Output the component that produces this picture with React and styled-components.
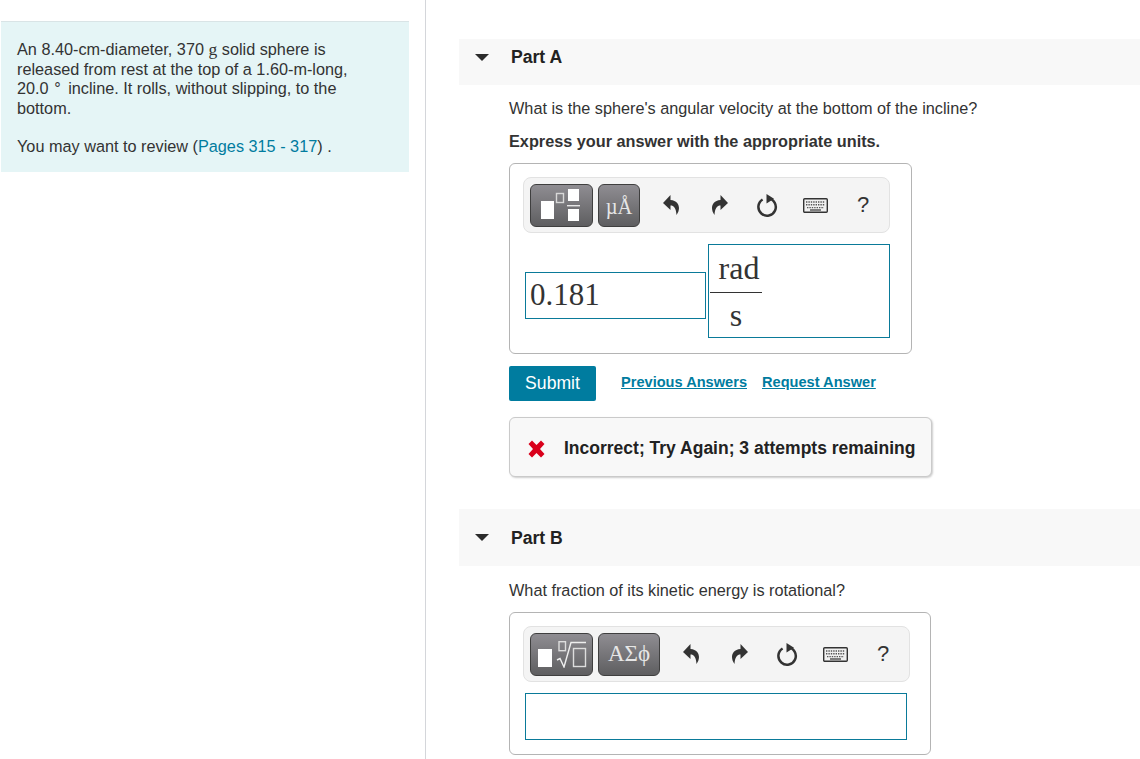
import React from 'react';
import styled, { createGlobalStyle } from 'styled-components';

const GlobalStyle = createGlobalStyle`
  html, body {
    margin: 0;
    height: 100%;
    overflow: hidden;
    background: #fff;
  }
  body {
    font-family: "Liberation Sans", Arial, sans-serif;
    font-size: 16.25px;
    color: #333;
  }
  #root { height: 100%; }
`;

const Page = styled.div`
  display: flex;
  height: 759px;
`;

const Sidebar = styled.aside`
  width: 425px;
  flex: none;
  box-sizing: content-box;
  border-right: 1px solid #d4d6da;
  padding-top: 21px;
`;

const InfoPanel = styled.div`
  width: 408px;
  height: 151px;
  margin-left: 1px;
  box-sizing: border-box;
  padding: 18px 16px 0;
  background: #e5f5f6;
  border-top: 1px solid #d9e4e6;
  line-height: 19.6px;
`;

const InfoText = styled.p`
  width: 338px;
  margin: 0 0 19px;
`;

const Unit = styled.span`
  font-family: "Liberation Serif", serif;
  font-size: 17.5px;
`;

const Degree = styled.span`
  margin: 0 3px 0 1px;
`;

const PageLink = styled.a`
  color: #007c9f;
`;

const Main = styled.main`
  flex: 1;
  min-width: 0;
  padding: 39px 0 0 33px;
`;

const PartHeader = styled.div`
  display: flex;
  align-items: center;
  box-sizing: border-box;
  height: ${(p) => p.$height}px;
  background: #f8f8f8;
  padding: 0 0 ${(p) => p.$lift || 0}px 16px;
  font-weight: 700;
  font-size: 17.6px;
  color: #222;
`;

const PartTitle = styled.span`
  margin-top: ${(p) => p.$drop || 0}px;
`;

const Caret = styled.span`
  width: 0;
  height: 0;
  border-left: 7px solid transparent;
  border-right: 7px solid transparent;
  border-top: 7px solid #2b2b2b;
  margin-right: 22px;
`;

const PartBody = styled.section`
  padding: ${(p) => p.$top}px 0 0 50px;
`;

const Question = styled.p`
  margin: 0;
  height: 19px;
  line-height: 19px;
`;

const Instruction = styled.p`
  margin: 14px 0 12px;
  height: 19px;
  line-height: 19px;
  font-weight: 700;
`;

const AnswerBox = styled.div`
  box-sizing: border-box;
  width: ${(p) => p.$width}px;
  height: ${(p) => p.$height}px;
  margin-top: ${(p) => p.$top || 0}px;
  padding: 13px 0 0 13px;
  border: 1px solid #b4b4b4;
  border-radius: 6px;
  background: #fff;
`;

const Toolbar = styled.div`
  display: flex;
  align-items: center;
  box-sizing: border-box;
  width: ${(p) => p.$width}px;
  height: 56px;
  padding-left: 6px;
  background: #f4f4f4;
  border: 1px solid #e2e2e2;
  border-radius: 8px;
`;

const ToolGroup = styled.div`
  display: flex;
  gap: 5px;
  margin-right: 7px;
`;

const ToolButton = styled.button`
  display: flex;
  align-items: center;
  justify-content: center;
  box-sizing: border-box;
  width: ${(p) => p.$width}px;
  height: 43px;
  padding: 0 ${(p) => p.$padRight || 0}px 0 ${(p) => p.$padLeft || 0}px;
  border: 1px solid #3f3f3f;
  border-radius: 6px;
  background: linear-gradient(#8f8d92, #5e5e60);
  color: #e6e6e6;
  font-family: "Liberation Serif", serif;
  font-size: ${(p) => p.$size}px;
`;

const TallGlyphs = styled.span`
  display: inline-block;
  transform: translateY(1px) scaleY(1.15);
`;

const IconSlot = styled.div`
  display: flex;
  align-items: center;
  justify-content: center;
  width: 48px;
  height: 100%;
  color: #333;
`;

const HelpMark = styled.span`
  font-size: 22px;
  line-height: 1;
`;

const MathRow = styled.div`
  display: flex;
  align-items: flex-start;
  gap: 2px;
  margin: 11px 0 0 2px;
`;

const ValueField = styled.div`
  box-sizing: border-box;
  width: ${(p) => p.$width}px;
  height: 47px;
  margin-top: ${(p) => p.$top}px;
  padding-left: 4px;
  border: 1px solid #0a7a99;
  font-family: "Liberation Serif", serif;
  font-size: 31px;
  line-height: 44px;
  color: #333;
`;

const UnitField = styled.div`
  box-sizing: border-box;
  width: 182px;
  height: 94px;
  padding: 1px 0 0 1px;
  border: 1px solid #0a7a99;
  font-family: "Liberation Serif", serif;
  font-size: 32px;
  color: #333;
`;

const Fraction = styled.div`
  width: 52px;
  text-align: center;
`;

const Numerator = styled.div`
  height: 46px;
  line-height: 44px;
  padding-left: 6px;
  border-bottom: 1px solid #333;
`;

const Denominator = styled.div`
  line-height: 44px;
`;

const EmptyField = styled(ValueField)`
  margin-left: 2px;
`;

const ActionRow = styled.div`
  display: flex;
  align-items: center;
  margin-top: 12px;
`;

const SubmitButton = styled.button`
  width: 87px;
  height: 35px;
  padding: 0;
  border: none;
  border-radius: 2px;
  background: #007c9f;
  color: #fff;
  font-family: inherit;
  font-size: 17.6px;
  margin-right: 25px;
`;

const ActionLink = styled.a`
  color: #007c9f;
  font-weight: 700;
  font-size: 14.6px;
  text-decoration: underline;
  margin: 0 15px 3px 0;
`;

const Feedback = styled.div`
  display: flex;
  align-items: center;
  box-sizing: border-box;
  width: 423px;
  height: 60px;
  margin: 16px 0 32px;
  padding: 3px 0 0 18px;
  background: #f8f8f8;
  border: 1px solid #cacaca;
  border-radius: 6px;
  box-shadow: 1px 1px 2px rgba(0, 0, 0, 0.2);
  font-weight: 700;
  font-size: 17.5px;
  color: #222;
`;

const FeedbackIcon = styled.svg`
  margin-right: 19px;
`;

const Undo = ({ flip }) => (
  <svg width="17" height="20" viewBox="0 0 17 20" style={flip ? { transform: 'scaleX(-1)' } : undefined}>
    <path d="M7.5 0 L0 8 L7.5 15 V10.5 C11 10.5 13 13 13.5 20 C17.5 15 17.5 6 7.5 5 Z" fill="#333" />
  </svg>
);

const Reload = () => (
  <svg width="21" height="23" viewBox="0 0 21 23" fill="none">
    <path d="M5.6 5.5 A8.7 8.7 0 1 0 11 4.3" stroke="#333" strokeWidth="2.5" />
    <path d="M9.5 0 L17 4.8 L9.5 9.5 Z" fill="#333" />
  </svg>
);

const Keyboard = () => (
  <svg width="25" height="15" viewBox="0 0 25 15" fill="none">
    <rect x="0.7" y="0.7" width="23.6" height="13.6" rx="1" fill="#f0f0f0" stroke="#333" strokeWidth="1.4" />
    <path d="M3 4 H22" stroke="#555" strokeWidth="1.6" strokeDasharray="1.4 1" />
    <path d="M3 6.8 H22" stroke="#555" strokeWidth="1.6" strokeDasharray="1.4 1" />
    <path d="M4 9.6 H21" stroke="#555" strokeWidth="1.4" strokeDasharray="1.4 1" />
    <path d="M7 12 H18" stroke="#333" strokeWidth="1.2" />
  </svg>
);

const FractionIcon = () => (
  <svg width="39" height="32" viewBox="0 0 39 32">
    <rect x="0" y="12" width="13" height="18" fill="#fff" />
    <rect x="15.5" y="4.5" width="7" height="9" fill="none" stroke="#d8d8d8" strokeWidth="1.4" />
    <rect x="27" y="0" width="11" height="12" fill="#fff" />
    <rect x="26" y="16" width="13" height="1.4" fill="#e8e8e8" />
    <rect x="27" y="20" width="11" height="12" fill="#fff" />
  </svg>
);

const RadicalIcon = () => (
  <svg width="49" height="27" viewBox="0 0 49 27" fill="none">
    <rect x="0" y="8" width="14" height="18" fill="#fff" />
    <rect x="21" y="0.7" width="6.5" height="9" stroke="#ddd" strokeWidth="1.4" />
    <path d="M19 19 L22 17.5 L26 26 L33 1.5 H48" stroke="#eee" strokeWidth="1.4" />
    <rect x="35.5" y="7.5" width="12" height="18" stroke="#ddd" strokeWidth="1.4" />
  </svg>
);

const Tools = () => (
  <>
    <IconSlot><Undo /></IconSlot>
    <IconSlot><Undo flip /></IconSlot>
    <IconSlot><Reload /></IconSlot>
    <IconSlot><Keyboard /></IconSlot>
    <IconSlot><HelpMark>?</HelpMark></IconSlot>
  </>
);

const App = () => (
  <Page>
    <GlobalStyle />
    <Sidebar>
      <InfoPanel>
        <InfoText>
          An 8.40-cm-diameter, 370 <Unit>g</Unit> solid sphere is released from rest at the top of a 1.60-m-long,
          20.0 <Degree>°</Degree> incline. It rolls, without slipping, to the bottom.
        </InfoText>
        <InfoText>
          You may want to review (<PageLink>Pages 315 - 317</PageLink>) .
        </InfoText>
      </InfoPanel>
    </Sidebar>
    <Main>
      <PartHeader $height={46} $lift={10}>
        <Caret />
        <PartTitle>Part A</PartTitle>
      </PartHeader>
      <PartBody $top={14}>
        <Question>What is the sphere's angular velocity at the bottom of the incline?</Question>
        <Instruction>Express your answer with the appropriate units.</Instruction>
        <AnswerBox $width={403} $height={191}>
          <Toolbar $width={367}>
            <ToolGroup>
              <ToolButton $width={63} $padRight={3}><FractionIcon /></ToolButton>
              <ToolButton $width={42} $size={20.5}><TallGlyphs>µÅ</TallGlyphs></ToolButton>
            </ToolGroup>
            <Tools />
          </Toolbar>
          <MathRow>
            <ValueField $width={181} $top={28}>0.181</ValueField>
            <UnitField>
              <Fraction>
                <Numerator>rad</Numerator>
                <Denominator>s</Denominator>
              </Fraction>
            </UnitField>
          </MathRow>
        </AnswerBox>
        <ActionRow>
          <SubmitButton>Submit</SubmitButton>
          <ActionLink>Previous Answers</ActionLink>
          <ActionLink>Request Answer</ActionLink>
        </ActionRow>
        <Feedback>
          <FeedbackIcon width="17" height="18" viewBox="0 0 17 18">
            <path d="M0.5 4 L4 0.5 L8.5 5 L13 0.5 L16.5 4 L12 9 L16.5 14 L13 17.5 L8.5 13 L4 17.5 L0.5 14 L5 9 Z" fill="#d9001b" />
          </FeedbackIcon>
          Incorrect; Try Again; 3 attempts remaining
        </Feedback>
      </PartBody>
      <PartHeader $height={57}>
        <Caret />
        <PartTitle $drop={2}>Part B</PartTitle>
      </PartHeader>
      <PartBody $top={15}>
        <Question>What fraction of its kinetic energy is rotational?</Question>
        <AnswerBox $width={422} $height={143} $top={12}>
          <Toolbar $width={387}>
            <ToolGroup>
              <ToolButton $width={63} $padLeft={2}><RadicalIcon /></ToolButton>
              <ToolButton $width={62} $size={23}>ΑΣϕ</ToolButton>
            </ToolGroup>
            <Tools />
          </Toolbar>
          <EmptyField $width={382} $top={11} />
        </AnswerBox>
      </PartBody>
    </Main>
  </Page>
);

export default App;
